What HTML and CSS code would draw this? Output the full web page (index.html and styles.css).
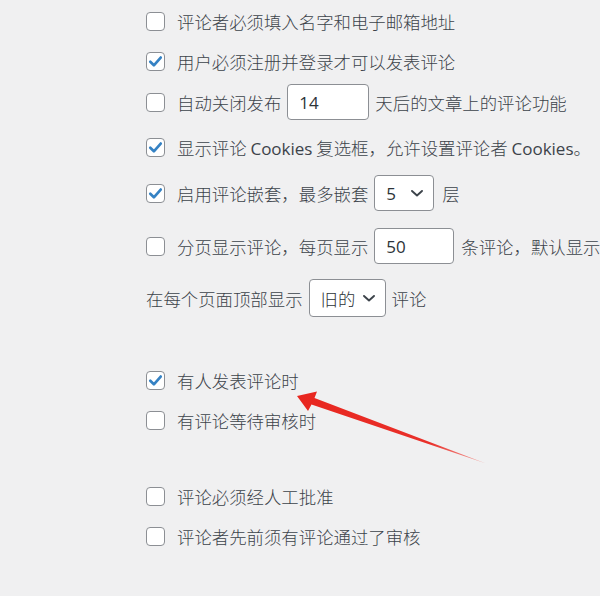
FILE: index.html
```html
<!DOCTYPE html>
<html lang="zh">
<head>
<meta charset="utf-8">
<link rel="stylesheet" href="styles.css">
</head>
<body>
<div class="page">
  <div class="group g1">
    <label class="row r1"><span class="cb"></span><span>评论者必须填入名字和电子邮箱地址</span></label>
    <label class="row r2"><span class="cb checked"><svg viewBox="0 0 20 20"><path d="M4.5 10.2 L8.3 14 L15.5 5.8" /></svg></span><span>用户必须注册并登录才可以发表评论</span></label>
    <label class="row r3"><span class="cb"></span><span>自动关闭发布</span><span class="field num">14</span><span>天后的文章上的评论功能</span></label>
    <label class="row r4"><span class="cb checked"><svg viewBox="0 0 20 20"><path d="M4.5 10.2 L8.3 14 L15.5 5.8" /></svg></span><span>显示评论 <span class="lat">Cookies</span> 复选框，允许设置评论者 <span class="lat">Cookies</span>。</span></label>
    <label class="row r5"><span class="cb checked"><svg viewBox="0 0 20 20"><path d="M4.5 10.2 L8.3 14 L15.5 5.8" /></svg></span><span>启用评论嵌套，最多嵌套</span><span class="field sel s5"><span class="lat">5</span><svg class="chev" viewBox="0 0 12 7"><path d="M1 1 L6 5.5 L11 1" /></svg></span><span class="after">层</span></label>
    <label class="row r6"><span class="cb"></span><span>分页显示评论，每页显示</span><span class="field num n50">50</span><span class="after cut">条评论，默认显示</span></label>
    <div class="row r7"><span>在每个页面顶部显示</span><span class="field sel sold">旧的<svg class="chev" viewBox="0 0 12 7"><path d="M1 1 L6 5.5 L11 1" /></svg></span><span>评论</span></div>
  </div>
  <div class="group g2">
    <label class="row"><span class="cb checked"><svg viewBox="0 0 20 20"><path d="M4.5 10.2 L8.3 14 L15.5 5.8" /></svg></span><span>有人发表评论时</span></label>
    <label class="row"><span class="cb"></span><span>有评论等待审核时</span></label>
  </div>
  <div class="group g3">
    <label class="row"><span class="cb"></span><span>评论必须经人工批准</span></label>
    <label class="row"><span class="cb"></span><span>评论者先前须有评论通过了审核</span></label>
  </div>
</div>
<svg class="arrow" width="600" height="596" viewBox="0 0 600 596">
  <defs>
    <linearGradient id="ag" x1="297" y1="396" x2="486" y2="463" gradientUnits="userSpaceOnUse">
      <stop offset="0" stop-color="#e8261f"/>
      <stop offset="0.7" stop-color="#e9302a"/>
      <stop offset="1" stop-color="#f4a7a3"/>
    </linearGradient>
  </defs>
  <polygon fill="url(#ag)" points="297,396 317,391.5 314.5,398 486,463.5 311.5,404.5 308,411"/>
</svg>
</body>
</html>
```
FILE: styles.css
```css
html, body {
  margin: 0;
  padding: 0;
  overflow: hidden;
}
body {
  width: 600px;
  height: 596px;
  background: #f0f0f1;
  color: #3c434a;
  font-family: "Noto Sans CJK SC", sans-serif;
  font-weight: 300;
  font-size: 17.4px;
  position: relative;
}
.lat {
  font-family: "Open Sans", "Noto Sans CJK SC", sans-serif;
  font-weight: 400;
  font-size: 17px;
}
.page {
  padding: 1px 0 0 146px;
}
.row {
  display: flex;
  align-items: center;
  white-space: nowrap;
  height: 40px;
}
.r3 { height: 42px; }
.r4 { height: 48px; }
.r5 { height: 44px; }
.r6 { height: 62px; }
.r7 { height: 42px; }
.g2 { margin-top: 41px; }
.g3 { margin-top: 36px; }
.cb {
  flex: none;
  width: 17px;
  height: 17px;
  border: 1px solid #8c8f94;
  border-radius: 4px;
  background: #fff;
  margin-right: 12px;
  position: relative;
  box-sizing: content-box;
}
.cb svg {
  position: absolute;
  left: -1px;
  top: -1px;
  width: 19px;
  height: 19px;
  fill: none;
  stroke: #3582c4;
  stroke-width: 2.8;
  stroke-linecap: round;
  stroke-linejoin: round;
}
.field {
  flex: none;
  box-sizing: border-box;
  height: 36px;
  border: 1px solid #8c8f94;
  border-radius: 4px;
  background: #fff;
  display: flex;
  align-items: center;
  padding-left: 11px;
  margin: 0 6px;
  color: #2c3338;
}
.num {
  width: 82px;
  font-family: "Open Sans", sans-serif;
  font-weight: 400;
  font-size: 17px;
}
.n50 { width: 80px; margin-right: 7px; }
.sel { justify-content: space-between; padding-right: 10px; }
.s5 { width: 60px; margin-right: 8px; }
.sold { width: 77px; height: 38px; padding-right: 10px; }
.cut {
  overflow: hidden;
  flex: 1 1 auto;
  min-width: 0;
}
.chev {
  width: 12px;
  height: 7px;
  fill: none;
  stroke: #3c434a;
  stroke-width: 1.9;
  stroke-linecap: round;
  stroke-linejoin: round;
}
.arrow {
  position: absolute;
  left: 0;
  top: 0;
  pointer-events: none;
}
```
